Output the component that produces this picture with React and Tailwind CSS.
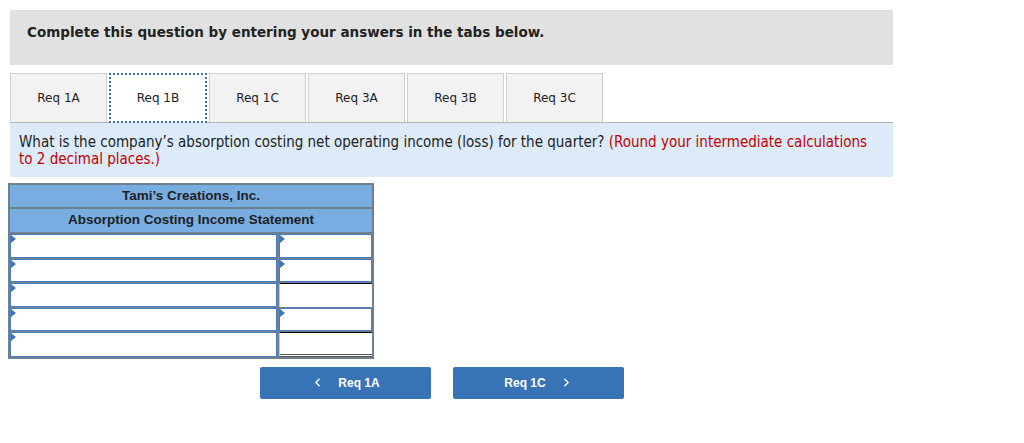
import { ChevronLeft, ChevronRight } from 'lucide-react'

const tabs = ['Req 1A', 'Req 1B', 'Req 1C', 'Req 3A', 'Req 3B', 'Req 3C']

// right column: 'input' has a field, 'total' is a plain cell with a rule on top
const rows = [
  { right: 'input' },
  { right: 'input' },
  { right: 'total' },
  { right: 'input' },
  { right: 'total', double: true },
]

function Marker() {
  return (
    <span className="absolute left-0 top-0 w-0 h-0 border-y-[4px] border-y-transparent border-l-[5px] border-l-[#3a76c0]" />
  )
}

function InputCell() {
  return (
    <div className="w-full h-full relative bg-white border border-[#4a7cc0]">
      <Marker />
    </div>
  )
}

export default function App() {
  return (
    <div className="w-[1024px] h-[443px] bg-white px-[10px] pt-[10px] font-['DejaVu_Sans',Verdana,sans-serif] text-[#222]">
      <div className="w-[883px] h-[55px] bg-[#e1e1e1] px-[17px] pt-[14px]">
        <h2 className="text-[13.5px] leading-[16px] font-bold">Complete this question by entering your answers in the tabs below.</h2>
      </div>

      <div className="flex gap-[2px] mt-[8px] h-[49px]">
        {tabs.map((t, i) =>
          i === 1 ? (
            <div
              key={t}
              className="w-[98px] h-[50px] bg-white border-2 border-dotted border-[#3d6fb3] flex items-center justify-center text-[12px] relative z-10"
            >
              {t}
            </div>
          ) : (
            <div
              key={t}
              className="w-[97px] bg-[#f2f2f2] border border-b-0 border-[#d0d0d0] flex items-center justify-center text-[12px]"
            >
              {t}
            </div>
          )
        )}
      </div>

      <div className="w-[883px] h-[55px] bg-[#dcebf7] border-t border-[#b5b5b5] px-[9px] pt-[11px] text-[15px] leading-[17px] font-stretch-condensed font-['DejaVu_Sans_Condensed','DejaVu_Sans',sans-serif]">
        <p>
          What is the company’s absorption costing net operating income (loss) for the quarter?{' '}
          <span className="text-[#c00000]">(Round your intermediate calculations to 2 decimal places.)</span>
        </p>
      </div>

      <div className="ml-[-2px] mt-[6px] w-[366px] border-2 border-[#70808f] font-['Liberation_Sans',Arial,sans-serif] text-[13.5px] font-bold text-[#1f1f1f]">
        <div className="h-[24px] bg-[#78ade2] flex items-center justify-center border-b-2 border-[#70808f]">
          Tami’s Creations, Inc.
        </div>
        <div className="h-[25px] bg-[#78ade2] flex items-center justify-center border-b-2 border-[#70808f]">
          Absorption Costing Income Statement
        </div>
        {rows.map((r, i) => (
          <div key={i} className={`flex h-[24.5px] ${i < rows.length - 1 ? 'border-b-[1px] border-[#70808f]' : ''}`}>
            <div className="w-[269px] h-full border-r-2 border-[#70808f]">
              <InputCell />
            </div>
            <div className="flex-1 h-full">
              {r.right === 'input' ? (
                <InputCell />
              ) : (
                <div
                  className={`h-full bg-white border-t border-black border-l border-l-[#c8c8c8] ${
                    r.double ? 'border-b-[3px] border-b-[#555] border-double' : ''
                  }`}
                />
              )}
            </div>
          </div>
        ))}
      </div>

      <div className="flex gap-[22px] ml-[250px] mt-[8px] font-['Liberation_Sans',Arial,sans-serif] text-[12px] font-bold text-white">
        <button className="w-[171px] h-[32px] bg-[#3873b6] rounded-[2px] flex items-center justify-center gap-[14px]">
          <ChevronLeft size={13} strokeWidth={2.5} />
          <span>Req 1A</span>
        </button>
        <button className="w-[171px] h-[32px] bg-[#3873b6] rounded-[2px] flex items-center justify-center gap-[14px]">
          <span>Req 1C</span>
          <ChevronRight size={13} strokeWidth={2.5} />
        </button>
      </div>
    </div>
  )
}
